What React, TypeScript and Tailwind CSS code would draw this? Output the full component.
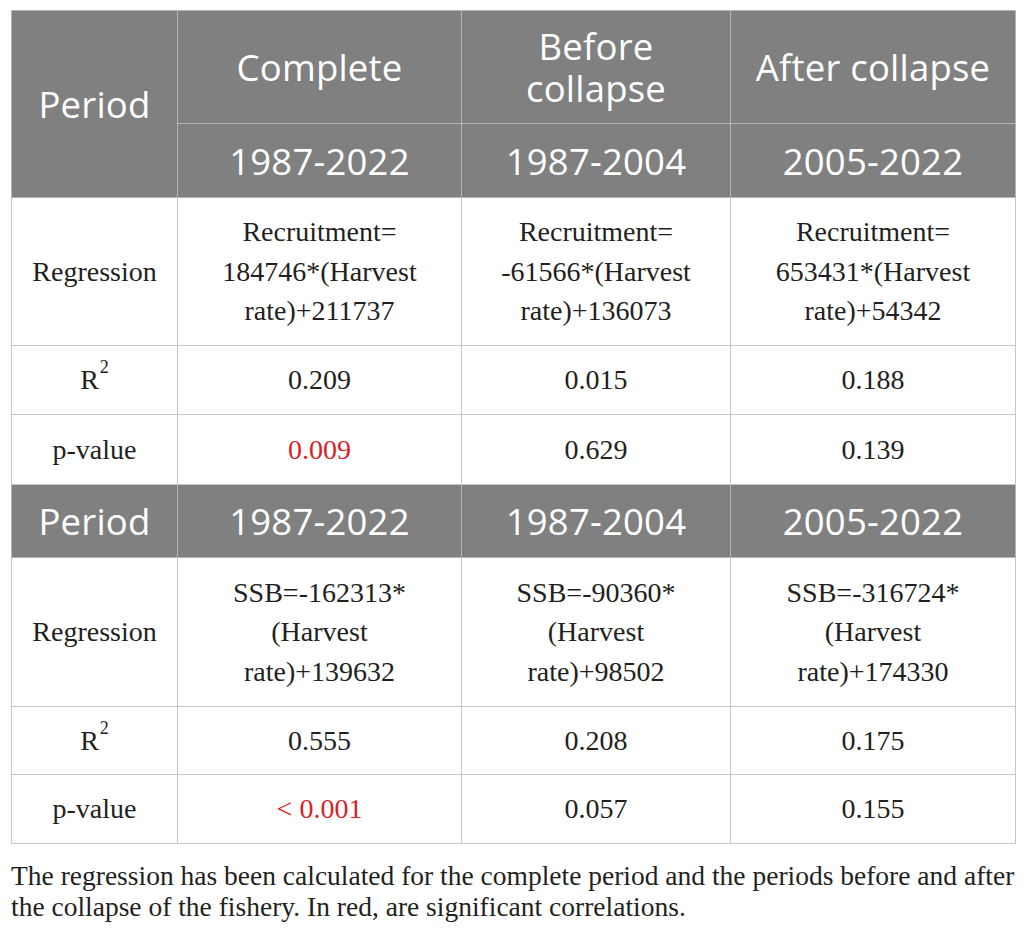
import React from 'react';

const serif = "font-['Liberation_Serif','Times_New_Roman',serif]";
const sans = "font-['Open_Sans','Noto_Sans',sans-serif]";

const headCell = `bg-[#808080] text-white border border-[#b4b4b4] text-center align-middle ${sans} text-[36.5px] leading-[42px] font-normal tracking-[0.2px]`;
const bodyCell = `border border-[#c6c6c6] text-center align-middle ${serif} text-[28px] leading-[39.5px] text-[#231f20]`;

function R2() {
  return (
    <>
      R<span className="inline-block align-top text-[18px] leading-none relative -top-[2px] ml-[1px]">2</span>
    </>
  );
}

export default function App() {
  return (
    <div className="w-[1026px] h-[933px] bg-white pt-[10px] px-[11px]">
      <table className="w-[1004px] table-fixed border-collapse">
        <colgroup>
          <col className="w-[166px]" />
          <col className="w-[284px]" />
          <col className="w-[269px]" />
          <col className="w-[285px]" />
        </colgroup>
        <tbody>
          <tr className="h-[113px]">
            <td rowSpan={2} className={headCell}>Period</td>
            <td className={headCell}>Complete</td>
            <td className={headCell}>
              Before
              <br />
              collapse
            </td>
            <td className={headCell}>After collapse</td>
          </tr>
          <tr className="h-[74px]">
            <td className={headCell}>1987-2022</td>
            <td className={headCell}>1987-2004</td>
            <td className={headCell}>2005-2022</td>
          </tr>
          <tr className="h-[148px]">
            <td className={bodyCell}>Regression</td>
            <td className={bodyCell}>
              Recruitment=
              <br />
              184746*(Harvest
              <br />
              rate)+211737
            </td>
            <td className={bodyCell}>
              Recruitment=
              <br />
              -61566*(Harvest
              <br />
              rate)+136073
            </td>
            <td className={bodyCell}>
              Recruitment=
              <br />
              653431*(Harvest
              <br />
              rate)+54342
            </td>
          </tr>
          <tr className="h-[69px]">
            <td className={bodyCell}><R2 /></td>
            <td className={bodyCell}>0.209</td>
            <td className={bodyCell}>0.015</td>
            <td className={bodyCell}>0.188</td>
          </tr>
          <tr className="h-[70px]">
            <td className={bodyCell}>p-value</td>
            <td className={`${bodyCell} !text-[#dc1f26]`}>0.009</td>
            <td className={bodyCell}>0.629</td>
            <td className={bodyCell}>0.139</td>
          </tr>
          <tr className="h-[73px]">
            <td className={headCell}>Period</td>
            <td className={headCell}>1987-2022</td>
            <td className={headCell}>1987-2004</td>
            <td className={headCell}>2005-2022</td>
          </tr>
          <tr className="h-[149px]">
            <td className={bodyCell}>Regression</td>
            <td className={bodyCell}>
              SSB=-162313*
              <br />
              (Harvest
              <br />
              rate)+139632
            </td>
            <td className={bodyCell}>
              SSB=-90360*
              <br />
              (Harvest
              <br />
              rate)+98502
            </td>
            <td className={bodyCell}>
              SSB=-316724*
              <br />
              (Harvest
              <br />
              rate)+174330
            </td>
          </tr>
          <tr className="h-[68px]">
            <td className={bodyCell}><R2 /></td>
            <td className={bodyCell}>0.555</td>
            <td className={bodyCell}>0.208</td>
            <td className={bodyCell}>0.175</td>
          </tr>
          <tr className="h-[69px]">
            <td className={bodyCell}>p-value</td>
            <td className={`${bodyCell} !text-[#dc1f26]`}>&lt; 0.001</td>
            <td className={bodyCell}>0.057</td>
            <td className={bodyCell}>0.155</td>
          </tr>
        </tbody>
      </table>
      <p className={`${serif} text-[27.5px] leading-[31px] text-[#231f20] mt-[16px] whitespace-nowrap`}>
        The regression has been calculated for the complete period and the periods before and after
        <br />
        the collapse of the fishery. In red, are significant correlations.
      </p>
    </div>
  );
}
